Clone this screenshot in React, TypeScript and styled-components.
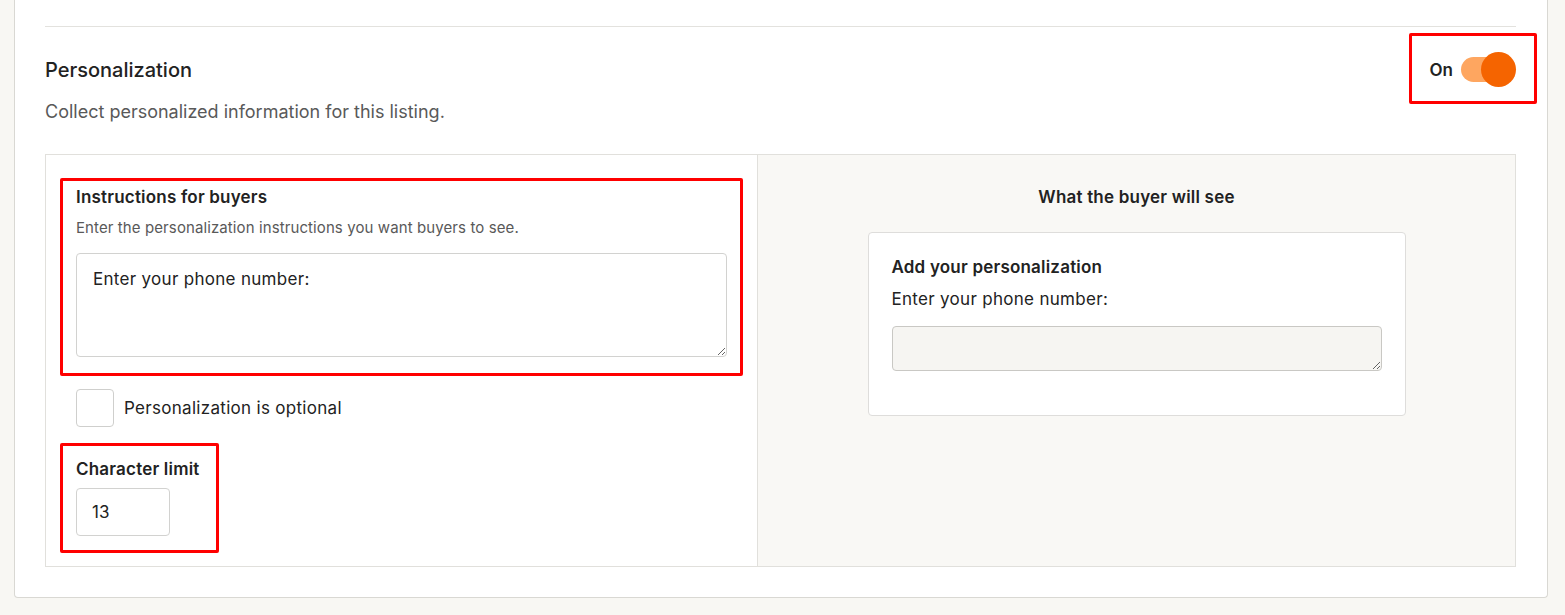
import React from "react";
import styled, { createGlobalStyle } from "styled-components";

const GlobalStyle = createGlobalStyle`
  html, body {
    margin: 0;
    padding: 0;
    background: #f8f7f3;
    font-family: Inter, "Noto Sans", "Liberation Sans", sans-serif;
    color: #222222;
  }
  * { box-sizing: border-box; }
`;

const Page = styled.div`
  width: 1565px;
  height: 615px;
  overflow: hidden;
  padding: 0 17px 0 14px;
`;

const Card = styled.section`
  background: #ffffff;
  border: 1px solid #d9d8d3;
  border-top: none;
  border-radius: 0 0 4px 4px;
  padding: 26px 31px 30px 30px;
`;

const Divider = styled.hr`
  margin: 0;
  border: none;
  border-top: 1px solid #e3e2de;
`;

const HeaderRow = styled.div`
  display: flex;
  align-items: center;
  justify-content: space-between;
  margin-top: 25px;
  height: 35px;
`;

const Title = styled.h2`
  margin: 0;
  font-size: 20px;
  font-weight: 500;
  line-height: 24px;
`;

const Highlight = styled.div<{ $inline?: boolean }>`
  border: 3px solid #ff0000;
  border-radius: 2px;
  display: ${(p) => (p.$inline ? "inline-flex" : "flex")};
  flex-direction: column;
`;

const ToggleBox = styled(Highlight)`
  flex-direction: row;
  align-items: center;
  gap: 8px;
  padding: 16px 18px 14px 18px;
  margin: -19px -21px -17px 0;
`;

const ToggleLabel = styled.span`
  font-size: 17px;
  font-weight: 600;
  line-height: 20px;
`;

const Track = styled.div`
  position: relative;
  width: 55px;
  height: 35px;
  display: flex;
  align-items: center;
`;

const TrackBar = styled.div`
  width: 46px;
  height: 25px;
  border-radius: 13px;
  background: #fea660;
`;

const Knob = styled.div`
  position: absolute;
  right: 0;
  top: 0;
  width: 35px;
  height: 35px;
  border-radius: 50%;
  background: #f56400;
`;

const Subtitle = styled.p`
  margin: 13px 0 0;
  font-size: 18px;
  line-height: 24px;
  color: #595959;
`;

const Panel = styled.div`
  margin-top: 30px;
  border: 1px solid #e1e0dc;
  display: grid;
  grid-template-columns: 712px 1fr;
`;

const LeftCol = styled.div`
  padding: 23px 14px 13px 14px;
  border-right: 1px solid #e1e0dc;
  display: flex;
  flex-direction: column;
  align-items: flex-start;
`;

const InstructionsBox = styled(Highlight)`
  align-self: stretch;
  padding: 6px 13px 16px 13px;
`;

const FieldTitle = styled.h3`
  margin: 0;
  font-size: 17px;
  font-weight: 600;
  line-height: 20px;
  letter-spacing: 0.2px;
`;

const FieldHint = styled.p`
  margin: 12px 0 0;
  font-size: 15px;
  line-height: 18px;
  color: #595959;
  letter-spacing: 0.1px;
`;

const TextArea = styled.textarea<{ $muted?: boolean }>`
  display: block;
  width: 100%;
  margin: ${(p) => (p.$muted ? "17px 0 0" : "16px 0 0")};
  height: ${(p) => (p.$muted ? "45px" : "104px")};
  padding: 14px 16px;
  border: 1px solid ${(p) => (p.$muted ? "#c9c8c4" : "#d2d2d0")};
  border-radius: 4px;
  background: ${(p) => (p.$muted ? "#f6f5f2" : "#ffffff")};
  font-family: inherit;
  font-size: 17px;
  line-height: 22px;
  color: #222222;
  letter-spacing: 0.3px;
  outline: none;
`;

const CheckRow = styled.label`
  display: flex;
  align-items: center;
  gap: 10px;
  margin: 13px 0 0 16px;
  font-size: 17px;
  line-height: 24px;
  letter-spacing: 0.3px;
`;

const CheckBox = styled.input`
  appearance: none;
  margin: 0;
  width: 38px;
  height: 38px;
  border: 1px solid #cfcfcd;
  border-radius: 4px;
  background: #ffffff;
`;

const LimitBox = styled(Highlight)`
  margin-top: 16px;
  padding: 13px 16px 14px 13px;
`;

const NumberInput = styled.input`
  margin-top: 9px;
  width: 94px;
  height: 48px;
  padding: 0 15px;
  border: 1px solid #d2d2d0;
  border-radius: 4px;
  font-family: inherit;
  font-size: 17px;
  color: #222222;
  outline: none;
`;

const RightCol = styled.div`
  background: #f9f8f5;
  padding-top: 32px;
  display: flex;
  flex-direction: column;
  align-items: center;
`;

const PreviewHeading = styled(FieldTitle)`
  text-align: center;
`;

const PreviewCard = styled.div`
  margin-top: 25px;
  width: 538px;
  background: #ffffff;
  border: 1px solid #dedddb;
  border-radius: 4px;
  padding: 24px 23px 44px 23px;
`;

const PreviewLabel = styled.p`
  margin: 12px 0 0;
  font-size: 17px;
  line-height: 20px;
  letter-spacing: 0.3px;
`;

export default function App() {
  return (
    <>
      <GlobalStyle />
      <Page>
        <Card>
          <Divider />
          <HeaderRow>
            <Title>Personalization</Title>
            <ToggleBox>
              <ToggleLabel>On</ToggleLabel>
              <Track>
                <TrackBar />
                <Knob />
              </Track>
            </ToggleBox>
          </HeaderRow>
          <Subtitle>Collect personalized information for this listing.</Subtitle>
          <Panel>
            <LeftCol>
              <InstructionsBox>
                <FieldTitle>Instructions for buyers</FieldTitle>
                <FieldHint>Enter the personalization instructions you want buyers to see.</FieldHint>
                <TextArea readOnly value="Enter your phone number:" />
              </InstructionsBox>
              <CheckRow>
                <CheckBox type="checkbox" />
                Personalization is optional
              </CheckRow>
              <LimitBox $inline>
                <FieldTitle>Character limit</FieldTitle>
                <NumberInput readOnly value="13" />
              </LimitBox>
            </LeftCol>
            <RightCol>
              <PreviewHeading>What the buyer will see</PreviewHeading>
              <PreviewCard>
                <FieldTitle>Add your personalization</FieldTitle>
                <PreviewLabel>Enter your phone number:</PreviewLabel>
                <TextArea $muted readOnly value="" />
              </PreviewCard>
            </RightCol>
          </Panel>
        </Card>
      </Page>
    </>
  );
}
